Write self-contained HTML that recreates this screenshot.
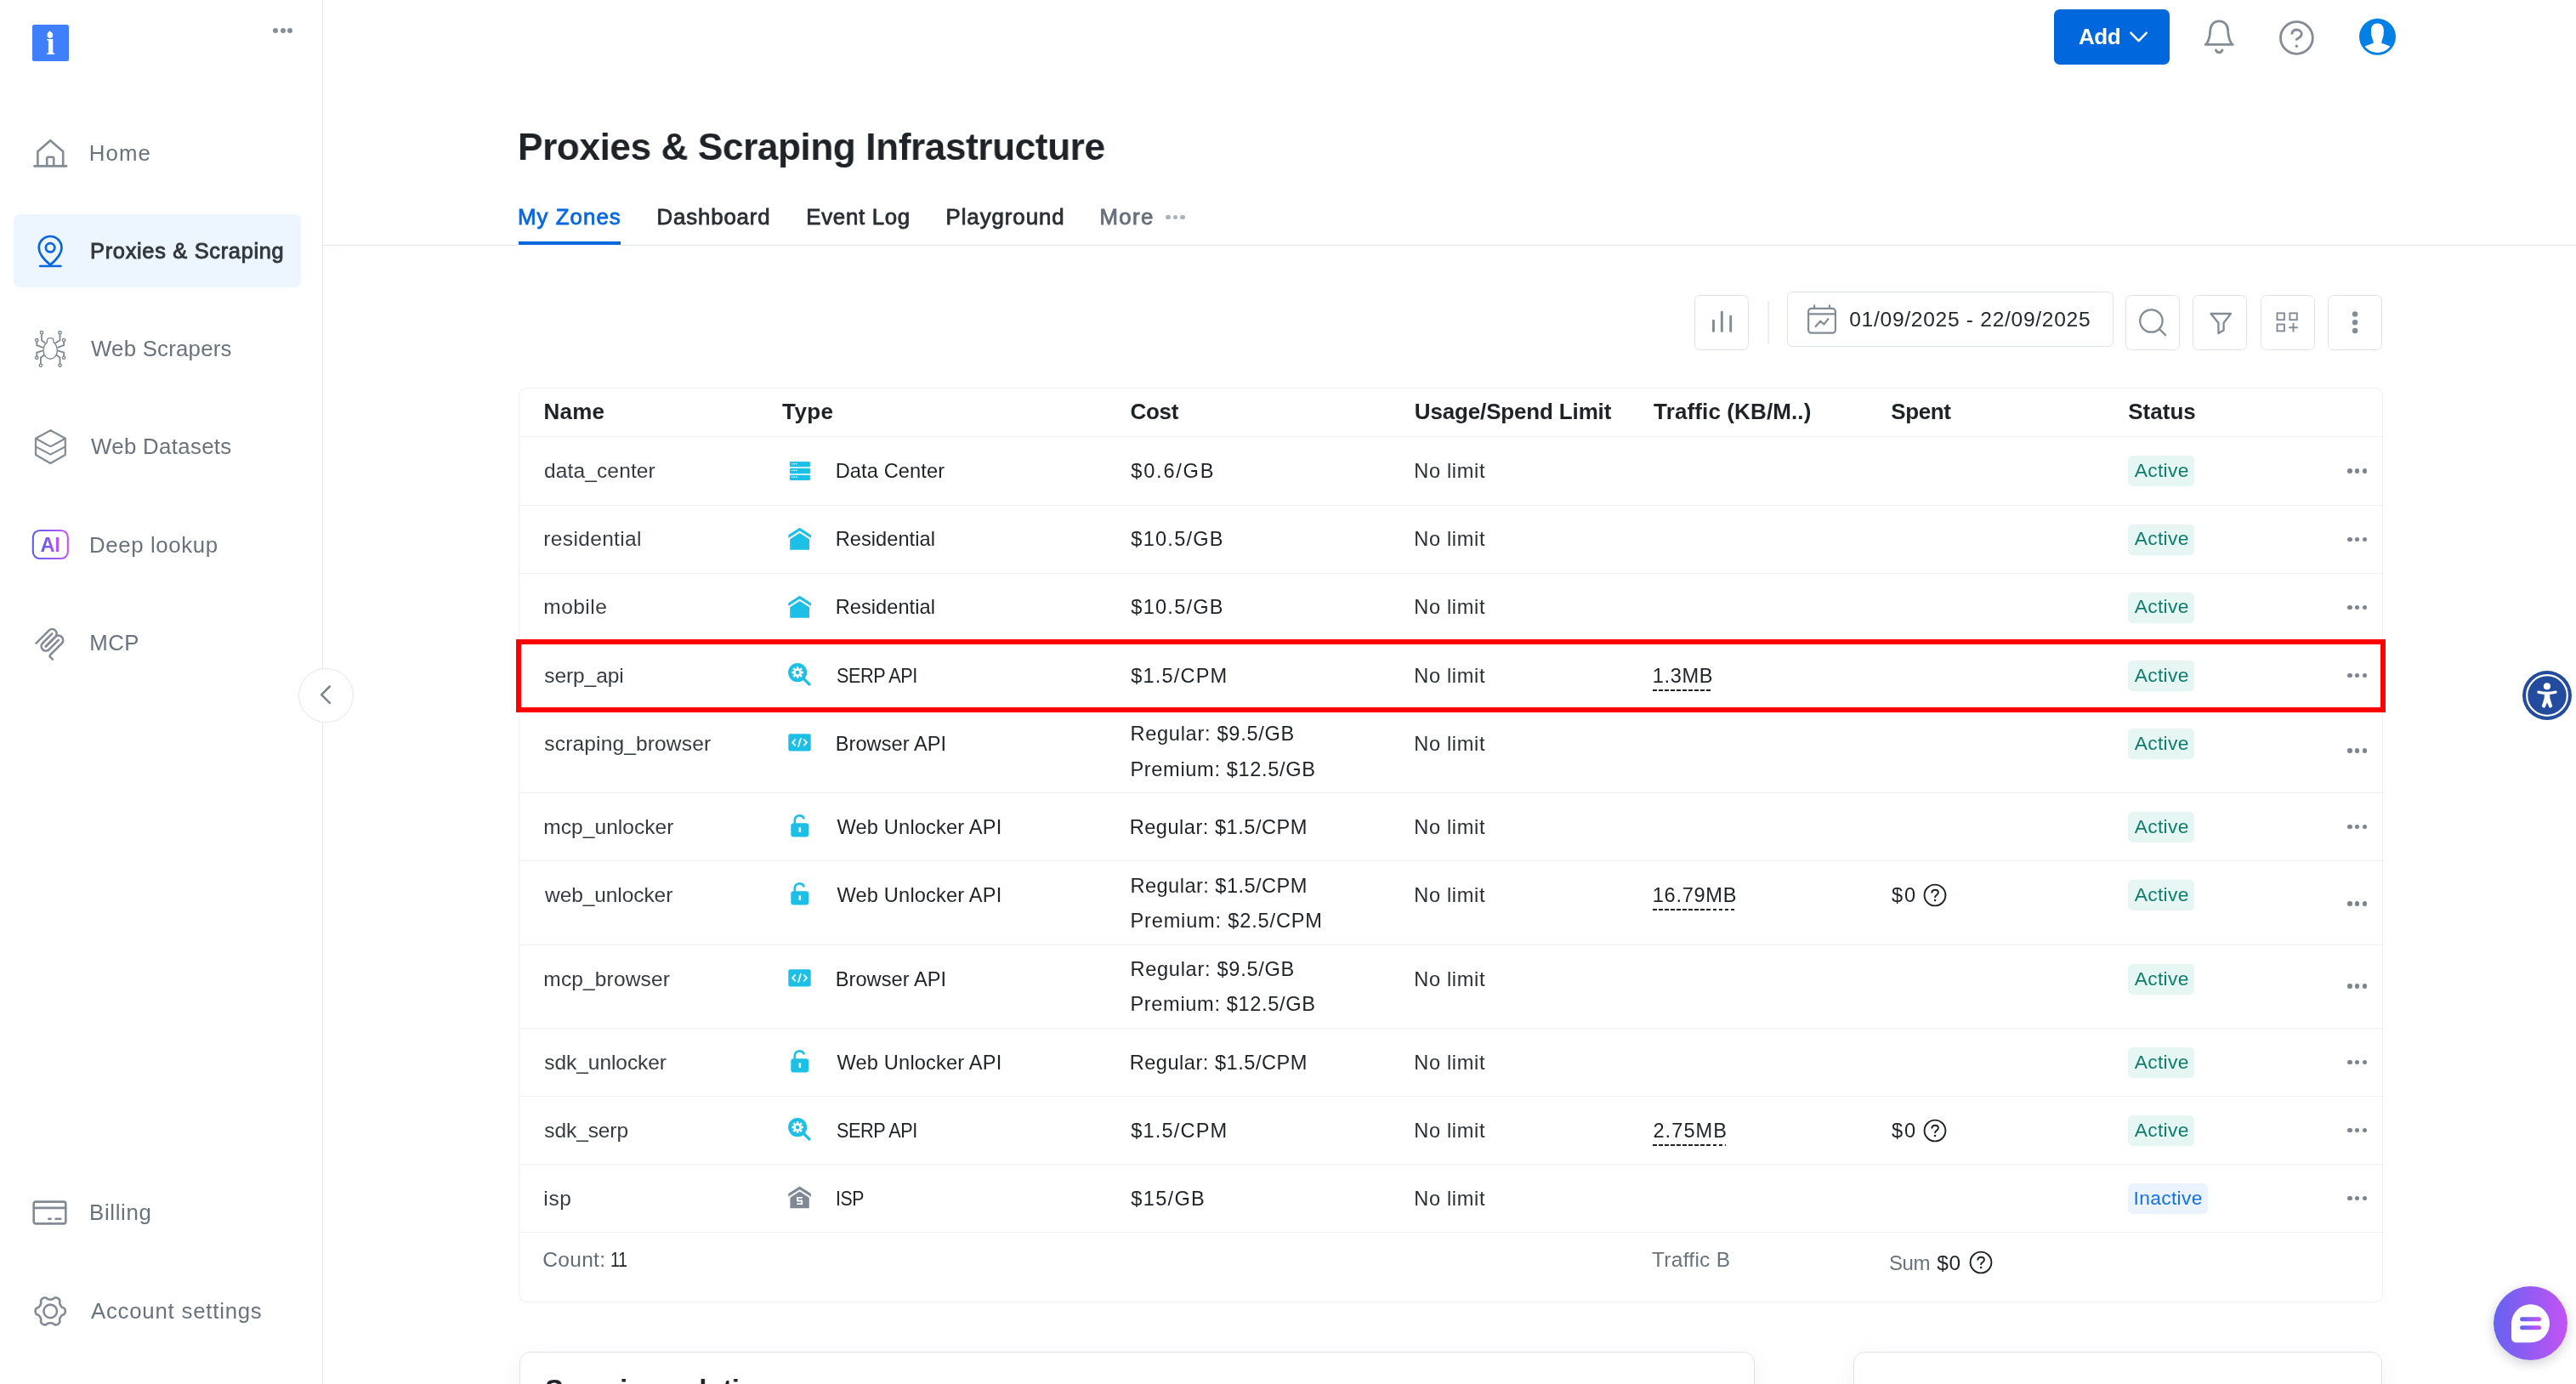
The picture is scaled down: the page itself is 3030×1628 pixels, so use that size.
<!DOCTYPE html>
<html lang="en"><head><meta charset="utf-8"><title>Proxies &amp; Scraping Infrastructure</title>
<style>
*,*::before,*::after{box-sizing:border-box;margin:0;padding:0}
html,body{width:3030px;height:1628px;overflow:hidden;background:#fff}
body{font-family:"Liberation Sans",sans-serif;color:#1f2327;-webkit-font-smoothing:antialiased}
.app{position:relative;width:3030px;height:1628px;overflow:hidden;will-change:transform}
.t{position:absolute;transform-origin:0 0;white-space:pre;line-height:1;font-weight:400;display:block;text-decoration:none}
.ic{position:absolute;display:block;overflow:visible}
button{font:inherit;border:0;background:none;display:block}
a{text-decoration:none;color:inherit}
i{font-style:normal}
/* sidebar */
.sidebar{position:absolute;left:0;top:0;width:380px;height:1628px;border-right:1.200px solid #e3e6ea;background:#fff}
.logo{position:absolute;left:38px;top:29px;width:42.600px;height:43px;border-radius:2.600px;background:#3f7ffc}
.logo-i{position:absolute;left:16.300px;top:4.400px;font:700 37.500px/1 "Liberation Serif",serif;color:#fff}
.side-dots{position:absolute;left:321px;top:33.300px;width:24px;height:6px}
.side-dots i,.more-dots i,.rdots i{position:absolute;top:0;border-radius:50%}
.side-dots i{width:6px;height:6px;background:#858e97}
.side-dots i:nth-child(1){left:0}.side-dots i:nth-child(2){left:8.600px}.side-dots i:nth-child(3){left:17.200px}
.nav-item{display:block}
.nav-bg{position:absolute;left:16px;top:252px;width:338px;height:86.400px;border-radius:7px;background:#edf5ff}
.ai-t{background:linear-gradient(90deg,#5a5cf2,#c654f6);-webkit-background-clip:text;background-clip:text;color:transparent;-webkit-text-fill-color:transparent}
/* main */
.main{position:absolute;left:0;top:0;width:3030px;height:1628px}
.add-btn{position:absolute;left:2416px;top:11px;width:136px;height:65px;border-radius:6.600px;background:#0068dc}
h1.t,h2.t{font-weight:700}
.tabs{position:absolute;left:0;top:0}
.tab-line{position:absolute;left:380px;top:288px;width:2650px;height:1px;background:#e0e4e8}
.tabs::after{content:"";position:absolute;left:610px;top:284px;width:120px;height:5px;background:#0468dc;border-bottom:1px solid #fff}
.more-dots{position:absolute;left:1371.300px;top:252.600px;width:23px;height:5.400px}
.more-dots i{width:5.400px;height:5.400px;background:#aab1b8}
.more-dots i:nth-child(1){left:0}.more-dots i:nth-child(2){left:8.600px}.more-dots i:nth-child(3){left:17.200px}
/* toolbar */
.tbtn{position:absolute;width:64.400px;height:64.600px;border:1.400px solid #dfe3e8;border-radius:6.500px;background:#fff}
.tbtn .ic{left:-1.400px!important;top:-1.400px!important}
.tsep{position:absolute;left:2079.300px;top:354px;width:1.600px;height:50px;background:#eceef1}
.datebox{position:absolute;left:2102px;top:343px;width:383.600px;height:64.600px;border:1.400px solid #dfe3e8;border-radius:6.500px;background:#fff}
.datebox>*{margin:-1.400px 0 0 -1.400px}
/* table */
.ztable{position:absolute;left:610px;top:456px;width:2193px;height:1076px;border:1px solid #eef0f3;border-radius:9px;background:#fff}
.ztable>.trow{margin:-1px 0 0 -1px}
.trow{position:absolute;left:0;width:2193px}
.trow::before{content:"";position:absolute;left:1px;right:1px;top:0;height:1px;background:#eef0f3}
.thead::before{display:none}
.trow.hl::after{content:"";position:absolute;left:-3px;top:-2px;width:2199px;height:86px;border:6px solid #fe0000;z-index:3}
.ti{width:30px;height:30px}
.badge{position:absolute;height:36.300px;border-radius:5.500px}
.badge.ok{background:#e6f7f3}
.badge.off{background:#ebf3fe}
.rdots{position:absolute;width:24px;height:5.600px}
.rdots i{width:5.600px;height:5.600px;background:#7c858e}
.rdots i:nth-child(1){left:0}.rdots i:nth-child(2){left:8.900px}.rdots i:nth-child(3){left:17.800px}
.dash{position:absolute;height:2.400px;background:repeating-linear-gradient(90deg,#1f2327 0,#1f2327 4.700px,transparent 4.700px,transparent 7.050px)}
/* cards */
.card{position:absolute;border:1.300px solid #dfe4e9;border-radius:13px;background:#fff;box-shadow:0 6px 30px rgba(30,40,60,.05)}
.card>.t{margin:-1.300px 0 0 -1.300px}
/* floating */
.collapse{position:absolute;left:351.200px;top:785.700px;width:64.600px;height:64.600px;border-radius:50%;border:1.300px solid #e3e6ea;background:#fff}
.collapse .ic{left:-1.300px!important;top:-1.300px!important}
.a11y{position:absolute;left:2967.400px;top:789.100px;width:58px;height:58px;border-radius:50%;background:#244c9e}
.chat{position:absolute;left:2933px;top:1512.700px;width:87px;height:87px;border-radius:50%;background:linear-gradient(90deg,#6563f0,#c453f5);box-shadow:0 4px 14px rgba(40,40,60,.22)}

</style></head><body>
<div class="app">
<aside class="sidebar">
<div class="logo"><span class="logo-i">ı</span><svg class="ic" style="left:0;top:0" width="43" height="43" viewBox="0 0 43 43"><g fill="#fff"><circle cx="20.850" cy="12.600" r="3.300"/><path d="M17.800 11.400C17.400 9.400 19.400 9.200 20.300 7.300C21.900 8.700 24.400 9.800 24.100 12.400Z"/></g></svg></div>
<div class="side-dots"><i></i><i></i><i></i></div>
<nav>
<a class="nav-item">
<svg class="ic" style="left:34px;top:158px" width="52" height="44" viewBox="34 158 52 44" ><g fill="none" stroke="#838c95" stroke-width="2.6" stroke-linecap="round" stroke-linejoin="round"><path d="M40.5 195.4H78"/><path d="M44.4 195V178.2L59.2 165.2L74.2 178.2V195"/><path d="M55.2 195V186.4a1.6 1.6 0 0 1 1.6-1.6h4.8a1.6 1.6 0 0 1 1.6 1.6V195"/></g></svg>
<span class="t" style="left:104.78px;top:168px;font-size:25.8px;letter-spacing:1.08px;color:#69737d;">Home</span>
</a>
<a class="nav-item active"><span class="nav-bg"></span>
<svg class="ic" style="left:38px;top:270px" width="44" height="50" viewBox="38 270 44 50" ><g fill="none" stroke="#0866e0" stroke-width="2.7" stroke-linecap="round" stroke-linejoin="round"><path d="M59.1 311.6C52.5 306 45.7 298.6 45.7 291.4a13.4 13.4 0 0 1 26.8 0C72.5 298.6 65.7 306 59.1 311.600Z"/><circle cx="59.1" cy="291.3" r="5.2"/><path d="M47.2 313H71.4"/></g></svg>
<span class="t" style="left:106.07px;top:283px;font-size:25.4px;letter-spacing:0.69px;color:#33383d;-webkit-text-stroke:0.9px;">Proxies &amp; Scraping</span>
</a>
<a class="nav-item">
<svg class="ic" style="left:36px;top:384px" width="46" height="52" viewBox="36 384 46 52" ><g fill="none" stroke="#7f8891" stroke-width="1.8" stroke-linejoin="round"><circle cx="49" cy="391.2" r="1.7" stroke-width="1.4"/><path d="M49 392.9L49 400.2L53.3 403.6"/><circle cx="43.3" cy="400.2" r="1.7" stroke-width="1.4"/><path d="M43.3 401.9L43.3 406.2L50.8 408.8"/><circle cx="43.3" cy="420.8" r="1.7" stroke-width="1.4"/><path d="M43.3 419.1L43.3 414.6L50.8 412.3"/><circle cx="47.9" cy="429.8" r="1.7" stroke-width="1.4"/><path d="M47.9 428.1L47.9 420.6L52 417.8"/><circle cx="70.5" cy="391.2" r="1.7" stroke-width="1.4"/><path d="M70.5 392.9L70.5 400.2L65.1 403.6"/><circle cx="75.1" cy="400.2" r="1.7" stroke-width="1.4"/><path d="M75.1 401.9L75.1 406.2L67.6 408.8"/><circle cx="75.1" cy="420.8" r="1.7" stroke-width="1.4"/><path d="M75.1 419.1L75.1 414.6L67.6 412.3"/><circle cx="70.5" cy="429.8" r="1.7" stroke-width="1.4"/><path d="M70.5 428.1L70.5 420.6L66.4 417.8"/><path stroke-width="1.4" d="M55.4 402.6C54.6 398.6 57 397.600 59.2 397.600C61.4 397.600 63.800 398.600 63 402.600C66.2 405 67.3 408.6 67.3 412.4C67.3 418 63.700 422.2 59.2 422.2C54.7 422.2 51.1 418 51.1 412.4C51.1 408.6 52.2 405 55.4 402.600Z"/></g></svg>
<span class="t" style="left:106.99px;top:398px;font-size:25.8px;letter-spacing:0.23px;color:#69737d;">Web Scrapers</span>
</a>
<a class="nav-item">
<svg class="ic" style="left:36px;top:500px" width="48" height="50" viewBox="36 500 48 50" ><g fill="none" stroke="#838c95" stroke-width="2.2" stroke-linejoin="round" stroke-linecap="round"><path d="M59.4 506.2L76.8 515.8V535L59.4 545L42 535V515.800Z"/><path d="M42.4 516L57.6 524.4Q59.4 525.4 61.2 524.4L76.400 516"/><path d="M42.4 525.6L59.4 534.6L76.400 525.600"/></g></svg>
<span class="t" style="left:106.99px;top:513px;font-size:25.8px;letter-spacing:0.34px;color:#69737d;">Web Datasets</span>
</a>
<a class="nav-item">
<svg class="ic" style="left:36px;top:621px" width="46" height="39" viewBox="36 621 46 39"><defs><linearGradient id="aig" x1="0" y1="0" x2="1" y2="0"><stop offset="0" stop-color="#5a5cf2"/><stop offset="1" stop-color="#c654f6"/></linearGradient></defs><rect x="38.8" y="624" width="41" height="33" rx="8" fill="none" stroke="url(#aig)" stroke-width="2.1"/></svg>
<span class="t ai-t" style="left:47.61px;top:630px;font-size:23.6px;letter-spacing:-0.43px;font-weight:700;">AI</span>
<span class="t" style="left:104.98px;top:629px;font-size:25.8px;letter-spacing:0.62px;color:#69737d;">Deep lookup</span>
</a>
<a class="nav-item">
<svg class="ic" style="left:37.4px;top:735.2px" width="43.19" height="43.19" viewBox="0 0 195 195"><g fill="none" stroke="#838c95" stroke-width="11.6" stroke-linecap="round"><path d="M25 97.8528L92.8823 29.9706C102.255 20.598 117.451 20.598 126.823 29.9706C136.196 39.3431 136.196 54.5391 126.823 63.9117L75.5581 115.177"/><path d="M76.2653 114.47L126.823 63.9117C136.196 54.5391 151.392 54.5391 160.765 63.9117L161.118 64.2652C170.491 73.6378 170.491 88.8338 161.118 98.2063L99.7248 159.6C96.6006 162.724 96.6006 167.789 99.7248 170.913L112.331 183.52"/><path d="M109.853 46.9411L59.6482 97.1457C50.2757 106.518 50.2757 121.714 59.6482 131.087C69.0208 140.459 84.2168 140.459 93.5894 131.087L143.794 80.8822"/></g></svg>
<span class="t" style="left:105.28px;top:744px;font-size:25.8px;letter-spacing:0.47px;color:#69737d;">MCP</span>
</a>
<a class="nav-item">
<svg class="ic" style="left:34px;top:1408px" width="50" height="38" viewBox="34 1408 50 38" ><g fill="none" stroke="#838c95" stroke-width="2.6" stroke-linecap="round"><rect x="39.7" y="1413.6" width="37.6" height="25.8" rx="2.4"/><path d="M40 1420.900H77"/><path d="M57.3 1433.8H59.700M65.6 1433.800H71.300"/></g></svg>
<span class="t" style="left:105.08px;top:1414px;font-size:25.8px;letter-spacing:0.66px;color:#69737d;">Billing</span>
</a>
<a class="nav-item">
<svg class="ic" style="left:36px;top:1520px" width="48" height="46" viewBox="36 1520 48 46" ><g fill="none" stroke="#838c95" stroke-width="2.6" stroke-linejoin="round"><path d="M76.8 1542.4 L76.75 1543.17 L76.59 1543.92 L76.32 1544.65 L75.94 1545.35 L75.41 1545.99 L74.37 1546.46 L73.31 1546.85 L72.73 1547.33 L72.25 1547.81 L71.84 1548.29 L71.47 1548.79 L71.15 1549.3 L70.87 1549.83 L70.62 1550.4 L70.41 1551 L70.23 1551.66 L70.11 1552.4 L70.3 1553.5 L70.42 1554.64 L70.13 1555.42 L69.71 1556.1 L69.21 1556.7 L68.64 1557.21 L68 1557.64 L67.31 1557.98 L66.58 1558.22 L65.81 1558.36 L65.01 1558.37 L64.19 1558.23 L63.26 1557.57 L62.4 1556.85 L61.7 1556.58 L61.04 1556.41 L60.42 1556.29 L59.8 1556.22 L59.2 1556.2 L58.6 1556.22 L57.98 1556.29 L57.36 1556.41 L56.7 1556.58 L56 1556.85 L55.14 1557.57 L54.21 1558.23 L53.39 1558.37 L52.59 1558.36 L51.82 1558.22 L51.09 1557.98 L50.4 1557.64 L49.76 1557.21 L49.19 1556.7 L48.69 1556.1 L48.27 1555.42 L47.98 1554.64 L48.1 1553.5 L48.29 1552.4 L48.17 1551.66 L47.99 1551 L47.78 1550.4 L47.53 1549.83 L47.25 1549.3 L46.93 1548.79 L46.56 1548.29 L46.15 1547.81 L45.67 1547.33 L45.09 1546.85 L44.03 1546.46 L42.99 1545.99 L42.46 1545.35 L42.08 1544.65 L41.81 1543.92 L41.65 1543.17 L41.6 1542.4 L41.65 1541.63 L41.81 1540.88 L42.08 1540.15 L42.46 1539.45 L42.99 1538.81 L44.03 1538.34 L45.09 1537.95 L45.67 1537.47 L46.15 1536.99 L46.56 1536.51 L46.93 1536.01 L47.25 1535.5 L47.53 1534.97 L47.78 1534.4 L47.99 1533.8 L48.17 1533.14 L48.29 1532.4 L48.1 1531.3 L47.98 1530.16 L48.27 1529.38 L48.69 1528.7 L49.19 1528.1 L49.76 1527.59 L50.4 1527.16 L51.09 1526.82 L51.82 1526.58 L52.59 1526.44 L53.39 1526.43 L54.21 1526.57 L55.14 1527.23 L56 1527.95 L56.7 1528.22 L57.36 1528.39 L57.98 1528.51 L58.6 1528.58 L59.2 1528.6 L59.8 1528.58 L60.42 1528.51 L61.04 1528.39 L61.7 1528.22 L62.4 1527.95 L63.26 1527.23 L64.19 1526.57 L65.01 1526.43 L65.81 1526.44 L66.58 1526.58 L67.31 1526.82 L68 1527.16 L68.64 1527.59 L69.21 1528.1 L69.71 1528.7 L70.13 1529.38 L70.42 1530.16 L70.3 1531.3 L70.11 1532.4 L70.23 1533.14 L70.41 1533.8 L70.62 1534.4 L70.87 1534.97 L71.15 1535.5 L71.47 1536.01 L71.84 1536.51 L72.25 1536.99 L72.73 1537.47 L73.31 1537.95 L74.37 1538.34 L75.41 1538.81 L75.94 1539.45 L76.32 1540.15 L76.59 1540.88 L76.75 1541.63Z"/><circle cx="59.2" cy="1542.400" r="7.8"/></g></svg>
<span class="t" style="left:106.95px;top:1530px;font-size:25.8px;letter-spacing:0.77px;color:#69737d;">Account settings</span>
</a>
</nav>
</aside>
<main class="main">
<header class="topbar">
<button class="add-btn">
<span class="t" style="left:28.95px;top:19px;font-size:26.2px;letter-spacing:-0.45px;font-weight:700;color:#fff;transform:scaleX(0.9952);">Add</span>
<svg class="ic" style="left:86px;top:22px" width="28" height="22" viewBox="2502 33 28 22"><path d="M2506.4 38.700L2515.6 48.2L2524.800 38.700" fill="none" stroke="#fff" stroke-width="2.5" stroke-linecap="round" stroke-linejoin="round"/></svg>
</button>
<svg class="ic" style="left:2586px;top:16px" width="50" height="54" viewBox="2586 16 50 54" ><g fill="none" stroke="#838c95" stroke-width="2.8" stroke-linecap="round" stroke-linejoin="round"><path d="M2594.2 52.4H2626.2"/><path d="M2595.4 51.400C2599.4 46.4 2599.6 40.400 2599.8 35.400C2600.2 28.8 2604.6 24.8 2610.2 24.800C2615.800 24.800 2620.2 28.800 2620.600 35.400C2620.800 40.400 2621 46.400 2625 51.400"/><path d="M2606.4 59C2607.4 61 2608.800 61.800 2610.200 61.800C2611.600 61.800 2613 61 2614 59"/></g></svg>
<svg class="ic" style="left:2678px;top:22px" width="48" height="46" viewBox="2678 22 48 46" ><g fill="none" stroke="#838c95" stroke-width="2.8" stroke-linecap="round" stroke-linejoin="round"><circle cx="2701.4" cy="44.5" r="18.9"/><path d="M2695.8 39.400C2696.600 36.400 2699 35 2701.600 35C2704.800 35 2707.200 37.200 2707.200 40C2707.200 43.800 2703.400 44.800 2701.200 46.400"/></g><circle cx="2701.4" cy="54.2" r="1.7" fill="#838c95"/></svg>
<svg class="ic" style="left:2772px;top:19px" width="50" height="50" viewBox="2772 19 50 50" ><defs><clipPath id="avc"><circle cx="2796.5" cy="43.3" r="18.700"/></clipPath></defs><circle cx="2796.5" cy="43.3" r="21.500" fill="#0280e6"/><g clip-path="url(#avc)" fill="#fff"><path d="M2796.400 27.400C2801.200 27.400 2803.900 30.800 2803.900 36C2803.900 38 2803.500 39 2803.700 40.200C2803.900 41.400 2803.200 42.600 2802.900 44L2801 50.500L2811.500 54.400L2815 70H2778L2781.500 54.400L2792 50.500L2790 44C2789.700 42.600 2789 41.400 2789.200 40.200C2789.400 39 2789 38 2789 36C2789 30.800 2791.700 27.400 2796.400 27.400Z"/></g></svg>
</header>
<h1 class="t" style="left:608.54px;top:150px;font-size:45.2px;letter-spacing:-0.45px;font-weight:700;color:#1f2327;transform:scaleX(0.9783);">Proxies &amp; Scraping Infrastructure</h1>
<nav class="tabs">
<a class="t tab on" style="left:609.08px;top:243px;font-size:25.8px;letter-spacing:1.05px;color:#0968df;-webkit-text-stroke:0.8px;">My Zones</a>
<a class="t tab" style="left:772.48px;top:243px;font-size:25.8px;letter-spacing:0.87px;color:#2a2f34;-webkit-text-stroke:0.8px;">Dashboard</a>
<a class="t tab" style="left:948.28px;top:243px;font-size:25.8px;letter-spacing:0.72px;color:#2a2f34;-webkit-text-stroke:0.8px;">Event Log</a>
<a class="t tab" style="left:1112.48px;top:243px;font-size:25.8px;letter-spacing:0.96px;color:#2a2f34;-webkit-text-stroke:0.8px;">Playground</a>
<a class="t tab" style="left:1293.48px;top:243px;font-size:25.8px;letter-spacing:1.36px;color:#66707a;-webkit-text-stroke:0.8px;">More</a>
<span class="more-dots"><i></i><i></i><i></i></span>
<span class="tab-line"></span>
</nav>
<div class="toolbar">
<button class="tbtn" style="left:1993px;top:347px"><svg class="ic" style="left:0;top:0" width="64" height="64" viewBox="1993 347 64 64"><g stroke="#838c95" stroke-width="2.9" stroke-linecap="round"><path d="M2015.5 377.200V389.500M2025.300 367.100V389.500M2035.700 372.100V389.500"/></g></svg></button>
<span class="tsep"></span>
<div class="datebox">
<svg class="ic" style="left:18px;top:10px" width="46" height="46" viewBox="2120 353 46 46"><g fill="none" stroke="#838c95" stroke-width="2.2" stroke-linecap="round" stroke-linejoin="round"><rect x="2127.100" y="362.900" width="31.800" height="28.800" rx="3.600"/><path d="M2127.500 369.400H2158.500"/><path d="M2134.100 359.400V362.400M2152 359.400V362.400"/><path d="M2135.600 384L2141.300 377.700L2145.400 381.500L2150.400 375.100"/></g></svg>
<span class="t" style="left:73.64px;top:21px;font-size:24.6px;letter-spacing:0.7px;color:#24292e;">01/09/2025 - 22/09/2025</span>
</div>
<button class="tbtn" style="left:2500px;top:347px"><svg class="ic" style="left:0;top:0" width="64" height="64" viewBox="2500 347 64 64"><g fill="none" stroke="#838c95" stroke-width="2.300" stroke-linecap="round"><circle cx="2530.400" cy="377.500" r="13.200"/><path d="M2540 387.100L2547.200 394.200"/></g></svg></button>
<button class="tbtn" style="left:2579px;top:347px"><svg class="ic" style="left:0;top:0" width="64" height="64" viewBox="2579 347 64 64"><g fill="none" stroke="#838c95" stroke-width="2.300" stroke-linejoin="round"><path d="M2600.500 369H2624L2615.600 379.800V388.400L2609.400 392.100V379.800Z"/></g></svg></button>
<button class="tbtn" style="left:2659px;top:347px"><svg class="ic" style="left:0;top:0" width="64" height="64" viewBox="2659 347 64 64"><g fill="none" stroke="#838c95" stroke-width="1.900"><rect x="2678.500" y="368.400" width="8.400" height="7.800"/><rect x="2693.400" y="368.400" width="8.400" height="7.800"/><rect x="2678.500" y="381.600" width="8.400" height="7.800"/><path d="M2692.300 385.300H2702.700M2697.500 380.100V390.500"/></g></svg></button>
<button class="tbtn" style="left:2738px;top:347px"><svg class="ic" style="left:0;top:0" width="64" height="64" viewBox="2738 347 64 64"><g fill="#838c95"><circle cx="2770.100" cy="369.400" r="3.200"/><circle cx="2770.100" cy="379.200" r="3.200"/><circle cx="2770.100" cy="389" r="3.200"/></g></svg></button>
</div>
<section class="ztable">
<div class="trow thead" style="top:0;height:57px">
<span class="t th" style="left:29.46px;top:15px;font-size:26px;letter-spacing:0.27px;font-weight:700;color:#1f2327;">Name</span>
<span class="t th" style="left:310.11px;top:15px;font-size:26px;letter-spacing:0.34px;font-weight:700;color:#1f2327;">Type</span>
<span class="t th" style="left:719.53px;top:15px;font-size:26px;letter-spacing:-0.33px;font-weight:700;color:#1f2327;">Cost</span>
<span class="t th" style="left:1053.84px;top:15px;font-size:26px;letter-spacing:-0.16px;font-weight:700;color:#1f2327;">Usage/Spend Limit</span>
<span class="t th" style="left:1335.11px;top:15px;font-size:26px;letter-spacing:0.12px;font-weight:700;color:#1f2327;">Traffic (KB/M..)</span>
<span class="t th" style="left:1614.25px;top:15px;font-size:26px;letter-spacing:-0.37px;font-weight:700;color:#1f2327;">Spent</span>
<span class="t th" style="left:1893.25px;top:15px;font-size:26px;letter-spacing:0.01px;font-weight:700;color:#1f2327;">Status</span>
</div>
<div class="trow" style="top:57px;height:81px">
<span class="t c-name" style="left:29.97px;top:29px;font-size:24.5px;letter-spacing:0.14px;color:#363b40;">data_center</span>
<svg class="ic ti" style="left:316.4px;top:26.4px" width="30" height="30" viewBox="0 0 30 30"><g fill="#1cbfe6"><rect x="2.900" y="3.900" width="24" height="6.400" rx="1.300"/><rect x="2.900" y="11.800" width="24" height="6.400" rx="1.300"/><rect x="2.900" y="19.700" width="24" height="6.400" rx="1.300"/></g><g fill="#fff"><rect x="4.800" y="6" width="1.500" height="1.300"/><rect x="7.400" y="6" width="1.500" height="1.300"/><rect x="10" y="6" width="1.500" height="1.300"/><rect x="4.800" y="13.700" width="1.500" height="1.300"/><rect x="7.400" y="13.700" width="1.500" height="1.300"/><rect x="10" y="13.700" width="1.500" height="1.300"/><rect x="4.800" y="21.500" width="1.500" height="1.300"/><rect x="7.400" y="21.500" width="1.500" height="1.300"/><rect x="10" y="21.500" width="1.500" height="1.300"/></g></svg>
<span class="t c-type" style="left:372.66px;top:30px;font-size:23.6px;letter-spacing:0.12px;color:#1f2327;">Data Center</span>
<span class="t c-cost" style="left:720.35px;top:30px;font-size:23.6px;letter-spacing:1.75px;color:#1f2327;">$0.6/GB</span>
<span class="t c-lim" style="left:1053.26px;top:30px;font-size:23.6px;letter-spacing:0.65px;color:#2b3035;">No limit</span>
<span class="badge ok" style="left:1893px;top:23.200px;width:78px"></span>
<span class="t bt" style="left:1900.76px;top:29px;font-size:22.8px;letter-spacing:0.31px;color:#0f7d6c;">Active</span>
<span class="rdots" style="left:2151px;top:38.35px"><i></i><i></i><i></i></span>
</div>
<div class="trow" style="top:138px;height:80px">
<span class="t c-name" style="left:29.37px;top:28px;font-size:24.5px;letter-spacing:0.34px;color:#363b40;">residential</span>
<svg class="ic ti" style="left:316.4px;top:26.4px" width="30" height="30" viewBox="0 -0.600 30 30"><g fill="#1cbfe6"><path d="M14.600 0.200L27.900 8.700V12.500L14.600 4L1.300 12.500V8.700Z"/><path d="M14.600 6.400L26 13.600V26.100H3.200V13.600Z"/></g></svg>
<span class="t c-type" style="left:372.66px;top:29px;font-size:23.6px;letter-spacing:0.05px;color:#1f2327;">Residential</span>
<span class="t c-cost" style="left:720.35px;top:29px;font-size:23.6px;letter-spacing:1.22px;color:#1f2327;">$10.5/GB</span>
<span class="t c-lim" style="left:1053.26px;top:29px;font-size:23.6px;letter-spacing:0.65px;color:#2b3035;">No limit</span>
<span class="badge ok" style="left:1893px;top:23.200px;width:78px"></span>
<span class="t bt" style="left:1900.76px;top:28px;font-size:22.8px;letter-spacing:0.31px;color:#0f7d6c;">Active</span>
<span class="rdots" style="left:2151px;top:37.85px"><i></i><i></i><i></i></span>
</div>
<div class="trow" style="top:218px;height:80px">
<span class="t c-name" style="left:29.37px;top:28px;font-size:24.5px;letter-spacing:0.45px;color:#363b40;">mobile</span>
<svg class="ic ti" style="left:316.4px;top:26.4px" width="30" height="30" viewBox="0 -0.600 30 30"><g fill="#1cbfe6"><path d="M14.600 0.200L27.900 8.700V12.500L14.600 4L1.300 12.500V8.700Z"/><path d="M14.600 6.400L26 13.600V26.100H3.200V13.600Z"/></g></svg>
<span class="t c-type" style="left:372.66px;top:29px;font-size:23.6px;letter-spacing:0.05px;color:#1f2327;">Residential</span>
<span class="t c-cost" style="left:720.35px;top:29px;font-size:23.6px;letter-spacing:1.22px;color:#1f2327;">$10.5/GB</span>
<span class="t c-lim" style="left:1053.26px;top:29px;font-size:23.6px;letter-spacing:0.65px;color:#2b3035;">No limit</span>
<span class="badge ok" style="left:1893px;top:23.200px;width:78px"></span>
<span class="t bt" style="left:1900.76px;top:28px;font-size:22.8px;letter-spacing:0.31px;color:#0f7d6c;">Active</span>
<span class="rdots" style="left:2151px;top:37.85px"><i></i><i></i><i></i></span>
</div>
<div class="trow hl" style="top:298px;height:80px">
<span class="t c-name" style="left:30.32px;top:29px;font-size:24.5px;letter-spacing:-0.09px;color:#363b40;">serp_api</span>
<svg class="ic ti" style="left:316.4px;top:26.4px" width="30" height="30" viewBox="0.300 1.200 30 30"><circle cx="12.400" cy="12.300" r="11" fill="#1cbfe6"/><path d="M20.300 20.300L26.200 26.100" stroke="#1cbfe6" stroke-width="3.400" stroke-linecap="round"/><g fill="#fff"><circle cx="12.400" cy="12.300" r="4.900"/><g stroke="#fff" stroke-width="2.500" stroke-linecap="butt"><path d="M12.400 5.400V19.200M5.500 12.300H19.300M7.500 7.400L17.300 17.200M17.300 7.400L7.500 17.200"/></g></g><circle cx="12.400" cy="12.300" r="2.300" fill="#1cbfe6"/></svg>
<span class="t c-type" style="left:373.62px;top:30px;font-size:23.6px;letter-spacing:-0.45px;color:#1f2327;transform:scaleX(0.9175);">SERP API</span>
<span class="t c-cost" style="left:720.35px;top:30px;font-size:23.6px;letter-spacing:1.13px;color:#1f2327;">$1.5/CPM</span>
<span class="t c-lim" style="left:1053.26px;top:30px;font-size:23.6px;letter-spacing:0.65px;color:#2b3035;">No limit</span>
<span class="t c-traf" style="left:1333.8px;top:30px;font-size:23.6px;letter-spacing:0.61px;color:#1f2327;">1.3MB</span>
<span class="dash" style="left:1333.5px;top:56.6px;width:70.3px"></span>
<span class="badge ok" style="left:1893px;top:23.200px;width:78px"></span>
<span class="t bt" style="left:1900.76px;top:29px;font-size:22.8px;letter-spacing:0.31px;color:#0f7d6c;">Active</span>
<span class="rdots" style="left:2151px;top:37.85px"><i></i><i></i><i></i></span>
</div>
<div class="trow" style="top:378px;height:98px">
<span class="t c-name" style="left:30.32px;top:29px;font-size:24.5px;letter-spacing:0.16px;color:#363b40;">scraping_browser</span>
<svg class="ic ti" style="left:316.4px;top:26.4px" width="30" height="30" viewBox="0.400 1.600 30 30"><rect x="1.700" y="4.800" width="26.400" height="20.400" rx="2.400" fill="#1cbfe6"/><g fill="none" stroke="#fff" stroke-width="1.900" stroke-linecap="round" stroke-linejoin="round"><path d="M9.600 11.700L6.400 15L9.600 18.300M20.200 11.700L23.400 15L20.200 18.300M16.300 10.300L13.500 19.700"/></g></svg>
<span class="t c-type" style="left:372.66px;top:30px;font-size:23.6px;letter-spacing:0.07px;color:#1f2327;">Browser API</span>
<span class="t c-cost" style="left:719.46px;top:18px;font-size:23.6px;letter-spacing:0.7px;color:#1f2327;">Regular: $9.5/GB</span>
<span class="t c-cost" style="left:719.46px;top:60px;font-size:23.6px;letter-spacing:0.65px;color:#1f2327;">Premium: $12.5/GB</span>
<span class="t c-lim" style="left:1053.26px;top:30px;font-size:23.6px;letter-spacing:0.65px;color:#2b3035;">No limit</span>
<span class="badge ok" style="left:1893px;top:23.200px;width:78px"></span>
<span class="t bt" style="left:1900.76px;top:29px;font-size:22.8px;letter-spacing:0.31px;color:#0f7d6c;">Active</span>
<span class="rdots" style="left:2151px;top:46.25px"><i></i><i></i><i></i></span>
</div>
<div class="trow" style="top:476px;height:80px">
<span class="t c-name" style="left:29.37px;top:29px;font-size:24.5px;letter-spacing:0.05px;color:#363b40;">mcp_unlocker</span>
<svg class="ic ti" style="left:316.4px;top:26.4px" width="30" height="30" viewBox="0.300 0.500 30 30"><path d="M9.100 12V7.600A5.700 5.700 0 0 1 19.800 4.900" fill="none" stroke="#1cbfe6" stroke-width="2.600" stroke-linecap="round"/><rect x="4.600" y="10.700" width="20.800" height="16.200" rx="3" fill="#1cbfe6"/><rect x="13.900" y="15.800" width="2.500" height="5.800" rx="0.600" fill="#fff"/></svg>
<span class="t c-type" style="left:374.5px;top:30px;font-size:23.6px;letter-spacing:0.18px;color:#1f2327;">Web Unlocker API</span>
<span class="t c-cost" style="left:718.66px;top:30px;font-size:23.6px;letter-spacing:0.51px;color:#1f2327;">Regular: $1.5/CPM</span>
<span class="t c-lim" style="left:1053.26px;top:30px;font-size:23.6px;letter-spacing:0.65px;color:#2b3035;">No limit</span>
<span class="badge ok" style="left:1893px;top:23.200px;width:78px"></span>
<span class="t bt" style="left:1900.76px;top:29px;font-size:22.8px;letter-spacing:0.31px;color:#0f7d6c;">Active</span>
<span class="rdots" style="left:2151px;top:37.85px"><i></i><i></i><i></i></span>
</div>
<div class="trow" style="top:556px;height:99px">
<span class="t c-name" style="left:31.04px;top:29px;font-size:24.5px;letter-spacing:-0.08px;color:#363b40;">web_unlocker</span>
<svg class="ic ti" style="left:316.4px;top:26.4px" width="30" height="30" viewBox="0.300 0.500 30 30"><path d="M9.100 12V7.600A5.700 5.700 0 0 1 19.800 4.900" fill="none" stroke="#1cbfe6" stroke-width="2.600" stroke-linecap="round"/><rect x="4.600" y="10.700" width="20.800" height="16.200" rx="3" fill="#1cbfe6"/><rect x="13.900" y="15.800" width="2.500" height="5.800" rx="0.600" fill="#fff"/></svg>
<span class="t c-type" style="left:374.5px;top:30px;font-size:23.6px;letter-spacing:0.18px;color:#1f2327;">Web Unlocker API</span>
<span class="t c-cost" style="left:719.46px;top:19px;font-size:23.6px;letter-spacing:0.46px;color:#1f2327;">Regular: $1.5/CPM</span>
<span class="t c-cost" style="left:719.46px;top:60px;font-size:23.6px;letter-spacing:0.82px;color:#1f2327;">Premium: $2.5/CPM</span>
<span class="t c-lim" style="left:1053.26px;top:30px;font-size:23.6px;letter-spacing:0.65px;color:#2b3035;">No limit</span>
<span class="t c-traf" style="left:1333.8px;top:30px;font-size:23.6px;letter-spacing:0.7px;color:#1f2327;">16.79MB</span>
<span class="dash" style="left:1333.5px;top:56.6px;width:98.3px"></span>
<span class="t c-spent" style="left:1614.95px;top:30px;font-size:23.6px;letter-spacing:1.93px;color:#1f2327;">$0</span>
<svg class="ic" style="left:1650.6px;top:25.6px" width="30" height="30" viewBox="0 0 30 30"><g fill="none" stroke="#1f2327" stroke-width="1.900" stroke-linecap="round" stroke-linejoin="round"><circle cx="15" cy="15" r="12.400"/><path d="M11.300 11.800C11.700 9.700 13.300 8.800 15.100 8.800C17.300 8.800 18.900 10.200 18.900 12C18.900 14.600 15.600 14.900 15.100 17.300"/></g><circle cx="15.100" cy="21" r="1.300" fill="#1f2327"/></svg>
<span class="badge ok" style="left:1893px;top:23.200px;width:78px"></span>
<span class="t bt" style="left:1900.76px;top:29px;font-size:22.8px;letter-spacing:0.31px;color:#0f7d6c;">Active</span>
<span class="rdots" style="left:2151px;top:47.95px"><i></i><i></i><i></i></span>
</div>
<div class="trow" style="top:655px;height:98px">
<span class="t c-name" style="left:29.37px;top:29px;font-size:24.5px;letter-spacing:0.14px;color:#363b40;">mcp_browser</span>
<svg class="ic ti" style="left:316.4px;top:26.4px" width="30" height="30" viewBox="0.400 1.600 30 30"><rect x="1.700" y="4.800" width="26.400" height="20.400" rx="2.400" fill="#1cbfe6"/><g fill="none" stroke="#fff" stroke-width="1.900" stroke-linecap="round" stroke-linejoin="round"><path d="M9.600 11.700L6.400 15L9.600 18.300M20.200 11.700L23.400 15L20.200 18.300M16.300 10.300L13.500 19.700"/></g></svg>
<span class="t c-type" style="left:372.66px;top:30px;font-size:23.6px;letter-spacing:0.07px;color:#1f2327;">Browser API</span>
<span class="t c-cost" style="left:719.46px;top:18px;font-size:23.6px;letter-spacing:0.7px;color:#1f2327;">Regular: $9.5/GB</span>
<span class="t c-cost" style="left:719.46px;top:59px;font-size:23.6px;letter-spacing:0.65px;color:#1f2327;">Premium: $12.5/GB</span>
<span class="t c-lim" style="left:1053.26px;top:30px;font-size:23.6px;letter-spacing:0.65px;color:#2b3035;">No limit</span>
<span class="badge ok" style="left:1893px;top:23.200px;width:78px"></span>
<span class="t bt" style="left:1900.76px;top:29px;font-size:22.8px;letter-spacing:0.31px;color:#0f7d6c;">Active</span>
<span class="rdots" style="left:2151px;top:46.25px"><i></i><i></i><i></i></span>
</div>
<div class="trow" style="top:753px;height:80px">
<span class="t c-name" style="left:30.32px;top:29px;font-size:24.5px;letter-spacing:-0.06px;color:#363b40;">sdk_unlocker</span>
<svg class="ic ti" style="left:316.4px;top:26.4px" width="30" height="30" viewBox="0.300 0.500 30 30"><path d="M9.100 12V7.600A5.700 5.700 0 0 1 19.800 4.900" fill="none" stroke="#1cbfe6" stroke-width="2.600" stroke-linecap="round"/><rect x="4.600" y="10.700" width="20.800" height="16.200" rx="3" fill="#1cbfe6"/><rect x="13.900" y="15.800" width="2.500" height="5.800" rx="0.600" fill="#fff"/></svg>
<span class="t c-type" style="left:374.5px;top:30px;font-size:23.6px;letter-spacing:0.18px;color:#1f2327;">Web Unlocker API</span>
<span class="t c-cost" style="left:718.66px;top:30px;font-size:23.6px;letter-spacing:0.51px;color:#1f2327;">Regular: $1.5/CPM</span>
<span class="t c-lim" style="left:1053.26px;top:30px;font-size:23.6px;letter-spacing:0.65px;color:#2b3035;">No limit</span>
<span class="badge ok" style="left:1893px;top:23.200px;width:78px"></span>
<span class="t bt" style="left:1900.76px;top:29px;font-size:22.8px;letter-spacing:0.31px;color:#0f7d6c;">Active</span>
<span class="rdots" style="left:2151px;top:37.85px"><i></i><i></i><i></i></span>
</div>
<div class="trow" style="top:833px;height:80px">
<span class="t c-name" style="left:30.32px;top:29px;font-size:24.5px;letter-spacing:-0.1px;color:#363b40;">sdk_serp</span>
<svg class="ic ti" style="left:316.4px;top:26.4px" width="30" height="30" viewBox="0.300 1.200 30 30"><circle cx="12.400" cy="12.300" r="11" fill="#1cbfe6"/><path d="M20.300 20.300L26.200 26.100" stroke="#1cbfe6" stroke-width="3.400" stroke-linecap="round"/><g fill="#fff"><circle cx="12.400" cy="12.300" r="4.900"/><g stroke="#fff" stroke-width="2.500" stroke-linecap="butt"><path d="M12.400 5.400V19.200M5.500 12.300H19.300M7.500 7.400L17.300 17.200M17.300 7.400L7.500 17.200"/></g></g><circle cx="12.400" cy="12.300" r="2.300" fill="#1cbfe6"/></svg>
<span class="t c-type" style="left:373.62px;top:30px;font-size:23.6px;letter-spacing:-0.45px;color:#1f2327;transform:scaleX(0.9175);">SERP API</span>
<span class="t c-cost" style="left:720.35px;top:30px;font-size:23.6px;letter-spacing:1.13px;color:#1f2327;">$1.5/CPM</span>
<span class="t c-lim" style="left:1053.26px;top:30px;font-size:23.6px;letter-spacing:0.65px;color:#2b3035;">No limit</span>
<span class="t c-traf" style="left:1334.41px;top:30px;font-size:23.6px;letter-spacing:1.06px;color:#1f2327;">2.75MB</span>
<span class="dash" style="left:1333.5px;top:56.6px;width:86.9px"></span>
<span class="t c-spent" style="left:1614.95px;top:30px;font-size:23.6px;letter-spacing:1.93px;color:#1f2327;">$0</span>
<svg class="ic" style="left:1650.6px;top:25.6px" width="30" height="30" viewBox="0 0 30 30"><g fill="none" stroke="#1f2327" stroke-width="1.900" stroke-linecap="round" stroke-linejoin="round"><circle cx="15" cy="15" r="12.400"/><path d="M11.300 11.800C11.700 9.700 13.300 8.800 15.100 8.800C17.300 8.800 18.900 10.200 18.900 12C18.900 14.600 15.600 14.900 15.100 17.300"/></g><circle cx="15.100" cy="21" r="1.300" fill="#1f2327"/></svg>
<span class="badge ok" style="left:1893px;top:23.200px;width:78px"></span>
<span class="t bt" style="left:1900.76px;top:29px;font-size:22.8px;letter-spacing:0.31px;color:#0f7d6c;">Active</span>
<span class="rdots" style="left:2151px;top:37.85px"><i></i><i></i><i></i></span>
</div>
<div class="trow" style="top:913px;height:80px">
<span class="t c-name" style="left:29.36px;top:29px;font-size:24.5px;letter-spacing:0.62px;color:#363b40;">isp</span>
<svg class="ic ti" style="left:316.4px;top:26.4px" width="30" height="30" viewBox="0 0.100 30 30"><g fill="#7f8993"><path d="M14.600 0.500L27.900 9V12.800L14.600 4.300L1.300 12.800V9Z"/><path d="M14.600 6.700L25.800 13.900V26.400H3.400V13.900Z"/></g><path d="M17.900 13.900H12V17.600H17.200V21.300H11.400" fill="none" stroke="#fff" stroke-width="1.800"/></svg>
<span class="t c-type" style="left:372.64px;top:30px;font-size:23.6px;letter-spacing:-0.45px;color:#1f2327;transform:scaleX(0.9018);">ISP</span>
<span class="t c-cost" style="left:720.35px;top:30px;font-size:23.6px;letter-spacing:1.28px;color:#1f2327;">$15/GB</span>
<span class="t c-lim" style="left:1053.26px;top:30px;font-size:23.6px;letter-spacing:0.65px;color:#2b3035;">No limit</span>
<span class="badge off" style="left:1893px;top:23.200px;width:93.500px"></span>
<span class="t bt" style="left:1899.5px;top:29px;font-size:22.8px;letter-spacing:0.33px;color:#1473e0;">Inactive</span>
<span class="rdots" style="left:2151px;top:37.85px"><i></i><i></i><i></i></span>
</div>
<div class="trow tfoot" style="top:993px;height:83px">
<span class="t" style="left:28.26px;top:21px;font-size:24.5px;letter-spacing:0.32px;color:#626c76;">Count:</span>
<span class="t" style="left:108.1px;top:21px;font-size:24.5px;letter-spacing:-0.45px;color:#1f2327;transform:scaleX(0.8027);">11</span>
<span class="t" style="left:1333.05px;top:21px;font-size:24.5px;letter-spacing:0.27px;color:#69737d;">Traffic B</span>
<span class="t" style="left:1611.91px;top:25px;font-size:24.5px;letter-spacing:-0.45px;color:#69737d;transform:scaleX(0.9815);">Sum</span>
<span class="t" style="left:1668.34px;top:25px;font-size:24.5px;letter-spacing:0.65px;color:#1f2327;">$0</span>
<svg class="ic" style="left:1704.8px;top:20.8px" width="30" height="30" viewBox="0 0 30 30"><g fill="none" stroke="#1f2327" stroke-width="1.900" stroke-linecap="round" stroke-linejoin="round"><circle cx="15" cy="15" r="12.400"/><path d="M11.300 11.800C11.700 9.700 13.300 8.800 15.100 8.800C17.300 8.800 18.900 10.200 18.900 12C18.900 14.600 15.600 14.900 15.100 17.300"/></g><circle cx="15.100" cy="21" r="1.300" fill="#1f2327"/></svg>
</div>
</section>
<section class="card" style="left:610.500px;top:1590.300px;width:1453px;height:60px">
<h2 class="t" style="left:30.56px;top:27.7px;font-size:33.6px;letter-spacing:-0.45px;font-weight:700;color:#1f2327;transform:scaleX(0.9683);">Scraping solutions</h2>
</section>
<section class="card" style="left:2179.800px;top:1590.300px;width:622.600px;height:60px"></section>
</main>
<button class="collapse"><svg class="ic" style="left:0;top:0" width="65" height="65" viewBox="351.200 785.700 65 65"><path d="M388 808.200L378.300 817.900L388 827.600" fill="none" stroke="#7c858e" stroke-width="2.500" stroke-linecap="round" stroke-linejoin="round"/></svg></button>
<button class="a11y"><svg class="ic" style="left:0;top:0" width="58" height="58" viewBox="0 0 58 58"><circle cx="29" cy="29" r="23.800" fill="none" stroke="#fff" stroke-width="2.200"/><g fill="#fff"><circle cx="28.900" cy="18.300" r="4.050"/><path d="M26.300 26H31.700L32 32.400L34.900 42.100L32.100 43.400L29 36.400L25.900 43.400L23.100 42.100L26 32.400Z" stroke="#fff" stroke-width="0.800" stroke-linejoin="round"/></g><path d="M18.900 25.100Q29 27.700 39 25.100" fill="none" stroke="#fff" stroke-width="3.300" stroke-linecap="round"/></svg></button>
<button class="chat"><svg class="ic" style="left:0;top:0" width="87" height="87" viewBox="0 0 87 87"><defs><linearGradient id="cg" x1="0" y1="0" x2="1" y2="0"><stop offset="0" stop-color="#6563f0"/><stop offset="1" stop-color="#c453f5"/></linearGradient></defs><path d="M21 43.800A22.500 22.500 0 1 1 43.500 66.300H26.500A5.500 5.500 0 0 1 21 60.800Z" fill="#fff"/><path d="M33.600 38.800H53.500M33.600 48.700H53.500" stroke="url(#cg)" stroke-width="5" stroke-linecap="round"/></svg></button>
</div>
</body></html>
